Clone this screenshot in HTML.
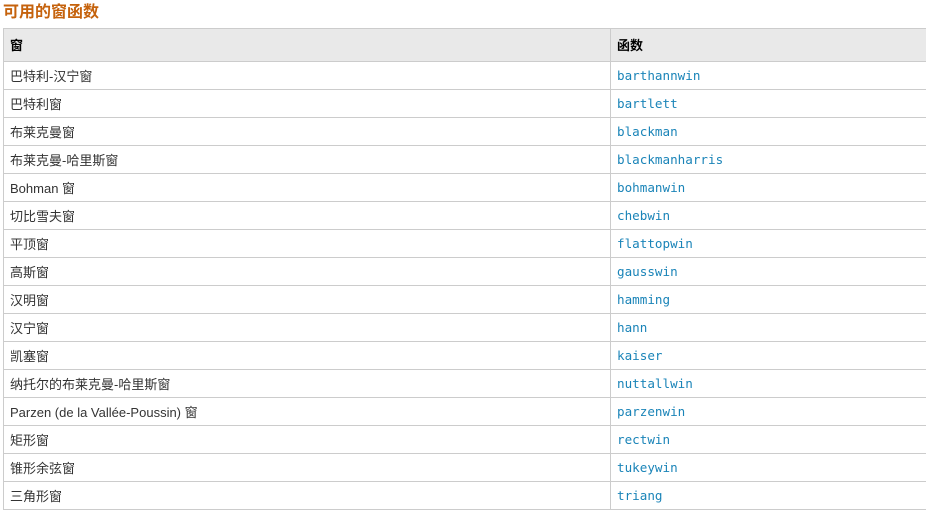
<!DOCTYPE html>
<html><head><meta charset="utf-8"><style>
body{margin:0;background:#fff;width:926px;height:521px;overflow:hidden;font-family:"Liberation Sans","Noto Sans CJK SC",sans-serif;}
h3{position:absolute;left:3px;top:2px;margin:0;font-size:16px;font-weight:bold;color:#c5620c;line-height:22px;}
table{position:absolute;left:3px;top:28px;border-collapse:collapse;width:930px;font-size:13px;color:#333;}
td,th{border:1px solid #ccc;padding:0 6px 1px;height:26px;text-align:left;}
th{background:#e9e9e9;height:31px;font-weight:bold;color:#000;}
td:first-child,th:first-child{width:594px;}
code{font-family:"DejaVu Sans Mono","Liberation Mono",monospace;color:#1a84b8;font-size:12.6px;}
</style></head><body>
<h3>可用的窗函数</h3>
<table>
<tr><th>窗</th><th>函数</th></tr>
<tr><td>巴特利-汉宁窗</td><td><code>barthannwin</code></td></tr>
<tr><td>巴特利窗</td><td><code>bartlett</code></td></tr>
<tr><td>布莱克曼窗</td><td><code>blackman</code></td></tr>
<tr><td>布莱克曼-哈里斯窗</td><td><code>blackmanharris</code></td></tr>
<tr><td>Bohman 窗</td><td><code>bohmanwin</code></td></tr>
<tr><td>切比雪夫窗</td><td><code>chebwin</code></td></tr>
<tr><td>平顶窗</td><td><code>flattopwin</code></td></tr>
<tr><td>高斯窗</td><td><code>gausswin</code></td></tr>
<tr><td>汉明窗</td><td><code>hamming</code></td></tr>
<tr><td>汉宁窗</td><td><code>hann</code></td></tr>
<tr><td>凯塞窗</td><td><code>kaiser</code></td></tr>
<tr><td>纳托尔的布莱克曼-哈里斯窗</td><td><code>nuttallwin</code></td></tr>
<tr><td>Parzen (de la Vallée-Poussin) 窗</td><td><code>parzenwin</code></td></tr>
<tr><td>矩形窗</td><td><code>rectwin</code></td></tr>
<tr><td>锥形余弦窗</td><td><code>tukeywin</code></td></tr>
<tr><td>三角形窗</td><td><code>triang</code></td></tr>
</table>
</body></html>
